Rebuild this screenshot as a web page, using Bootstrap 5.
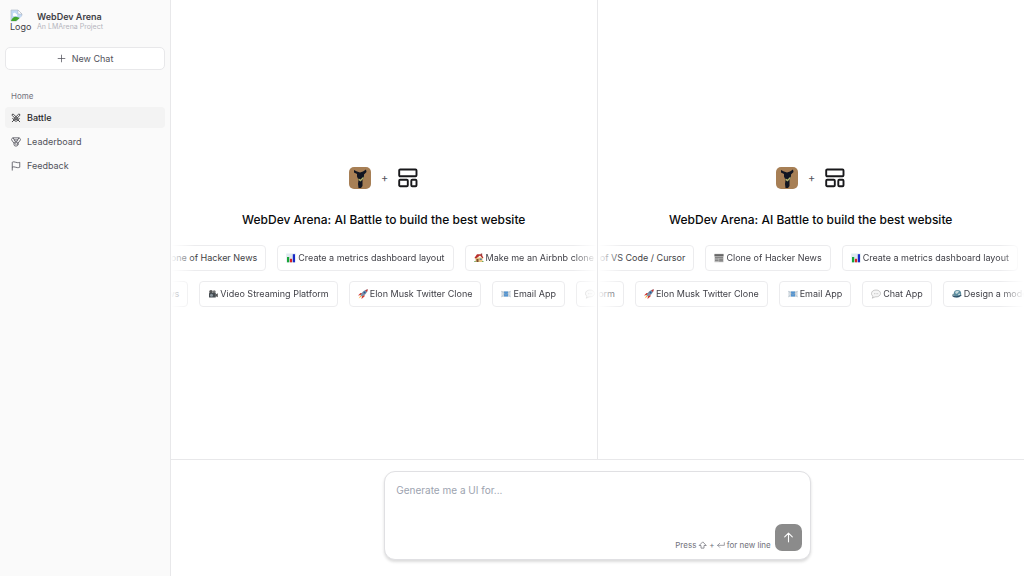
<!DOCTYPE html>
<html lang="en">
<head>
<meta charset="utf-8">
<meta name="viewport" content="width=device-width, initial-scale=1">
<title>WebDev Arena</title>
<link href="https://cdn.jsdelivr.net/npm/bootstrap@5.3.0/dist/css/bootstrap.min.css" rel="stylesheet">
<style>
  body { font-family: Inter, "Liberation Sans", sans-serif; font-size: 9px; line-height: 16px; color: #3f3f46; background: #fff; }
  svg { display: block; flex: none; }
  .line-icon { fill: none; stroke: currentColor; stroke-width: 2; stroke-linecap: round; stroke-linejoin: round; }

  .sidebar { width: 171px; background: #fafafa; border-right: 1px solid #e8e8ea; padding: 9px 5px; }
  .brand { gap: 5px; padding-left: 5px; height: 24px; }
  .brand-logo { width: 22px; height: 24px; overflow: hidden; font-size: 9px; line-height: 10px; color: #3f3f46; }
  .brand-name { font-weight: 600; line-height: 12px; color: #3f3f46; }
  .brand-sub { font-size: 7px; line-height: 8px; color: #b4b4bc; }
  .new-chat { height: 23px; margin-top: 14px; gap: 6px; padding: 0; font-size: 9px; color: #52525b; background: #fff; border: 1px solid #e8e8ea; border-radius: 5px; }
  .section-label { margin-top: 18px; padding-left: 6px; font-size: 8px; color: #71717a; }
  .side-links { margin-top: 3px; gap: 3px; }
  .side-links .nav-link { height: 21px; padding: 0 6px; gap: 6px; font-size: 9px; color: #52525b; border-radius: 4px; }
  .side-links .nav-link.active { background: #f3f3f3; color: #27272a; font-weight: 500; }

  .pane:first-child { border-right: 1px solid #e8e8ea; }
  .pane-inner { padding-top: 15px; }
  .pane-marks { gap: 10px; color: #18181b; }
  .plus-sign { font-size: 11px; color: #52525b; }
  .pane-title { margin: 22px 0 16px; font-size: 12px; line-height: 18px; font-weight: 500; color: #09090b; }
  .ticker { overflow: hidden; -webkit-mask-image: linear-gradient(90deg, transparent, #000 24px, #000 calc(100% - 24px), transparent); mask-image: linear-gradient(90deg, transparent, #000 24px, #000 calc(100% - 24px), transparent); }
  .ticker + .ticker { margin-top: 10px; }
  .ticker-track { gap: 11px; width: max-content; margin-left: calc(-1px * var(--scrolled)); }
  .chip { height: 26px; padding: 0 8px; gap: 2px; font-size: 9px; color: #3f3f46; background: #fff; border: 1px solid #ececee; border-radius: 4px; white-space: nowrap; }

  .composer-bar { border-top: 1px solid #e8e8ea; padding: 11px 0 16px; }
  .composer { height: 89px; border: 1px solid #e0e0e3; border-radius: 11px; background: #fff; box-shadow: 0 2px 3px rgba(0,0,0,.14); padding: 9px 8px 8px 11px; }
  .composer textarea { resize: none; outline: 0; font-size: 10px; line-height: 18px; color: #18181b; }
  .composer textarea::placeholder { color: #9ca3af; opacity: 1; }
  .hint { font-size: 8px; line-height: 12px; color: #71717a; gap: 2px; }
  .send { width: 27px; height: 27px; padding: 0; background: #8b8b8b; color: #fff; border: 0; border-radius: 7px; }
</style>
</head>
<body>
<svg width="0" height="0" class="position-absolute" aria-hidden="true">
  <symbol id="i-bot" viewBox="0 0 22 22">
    <rect width="22" height="22" rx="5" fill="#a77f55"/>
    <path d="M5 3 8 4.500 11 5.500 14 4.500 17 2.500 17.500 5 15 7.500 15 10 13.500 13 13.500 19 12 21 9.500 21 9 17 9.500 13 8 9.500 8 7 5 5.500Z" fill="#111521"/>
    <path d="m9.500 11.500 2 1 3-3v2l-3 3-2-1.500Z" fill="#b3b66e"/>
  </symbol>
  <symbol id="i-grid" viewBox="0 0 20 20">
    <g fill="none" stroke="currentColor" stroke-width="1.900"><rect x="1.200" y="1.500" width="17.300" height="6.800" rx="1"/><rect x="1.200" y="11.800" width="8.600" height="6.400" rx="1"/><rect x="13.300" y="11.800" width="5.200" height="6.400" rx="1"/></g>
  </symbol>
  <symbol id="e-news" viewBox="0 0 10 10">
    <rect x=".5" y=".8" width="9" height="8.400" fill="#bbb"/><path d="M.5 1.200h9v2h-9z" fill="#666"/><path d="M1 4.500h8M1 6h3.500M1 7.500h3.500" stroke="#777" stroke-width=".8"/><path d="M5.200 5.500h3.800v3H5.200z" fill="#888"/>
  </symbol>
  <symbol id="e-chart" viewBox="0 0 10 10">
    <rect x=".3" y=".5" width="9.400" height="9" fill="#dfe9ef"/><path d="M1 4h2.200v5.300H1z" fill="#16a637"/><path d="M3.900 5.800h2.200v3.500H3.900z" fill="#d92525"/><path d="M6.800 1.200H9v8.100H6.800z" fill="#1828c8"/>
  </symbol>
  <symbol id="e-house" viewBox="0 0 10 10">
    <path d="M1.500 4.500h7V9h-7z" fill="#e8c57f"/><path d="M.4 5 3 1.200h4.500L9.500 5l-1 .3L6 2.500 2 5.500Z" fill="#b82f2c"/><path d="M6.800.5h1.400v2H6.800z" fill="#944"/><path d="M2.500 6h2v3h-2z" fill="#7b4c33"/><path d="M5.700 5.500h2V7h-2z" fill="#5780a3"/><path d="M0 9q1-2.200 2 0M7.800 9q1-2.200 2 0" fill="#559b47"/>
  </symbol>
  <symbol id="e-camera" viewBox="0 0 10 10">
    <circle cx="3" cy="2.800" r="1.800" fill="#555"/><circle cx="6.200" cy="2.800" r="1.500" fill="#777"/><rect x="1" y="3.800" width="6.800" height="4.800" rx=".7" fill="#454b50"/><path d="m7.500 5.500 2.300-1.200v4L7.500 7z" fill="#555"/><circle cx="3.500" cy="6.200" r="1.500" fill="#8a969e"/>
  </symbol>
  <symbol id="e-rocket" viewBox="0 0 10 10">
    <path d="M3 6 0 6.500 2.500 4h2zM4 7 3.500 10 6.500 7.500V5.500z" fill="#d5362f"/><path d="M2.500 6.300Q4.500 1.200 9.800.3 9 5.500 3.800 7.500Z" fill="#7d91a8"/><path d="M7.300 1.200 9.800.3 9 2.900Z" fill="#cf322e"/><circle cx="6.500" cy="3.600" r="1" fill="#225a9a"/><path d="m2.500 6.500 1 1-2.800 2Z" fill="#ffae32"/>
  </symbol>
  <symbol id="e-mail" viewBox="0 0 10 10">
    <rect x=".3" y="2" width="9.400" height="6" fill="#d7dee4"/><rect x="3" y="2.500" width="4" height="5" fill="#5495d2"/><path d="M.3 2.200 5 5.600 9.700 2.200M.3 8 3.500 5M9.700 8 6.500 5" fill="none" stroke="#9baebd" stroke-width=".5"/>
  </symbol>
  <symbol id="e-chat" viewBox="0 0 10 10">
    <path d="M5 1C2.200 1 .5 2.500.5 4.500S1.600 7 2.100 7.300L1.200 9.200 4 7.900C7.500 8.100 9.500 6.500 9.500 4.500S7.800 1 5 1Z" fill="#f5f5f5" stroke="#aaa" stroke-width=".6"/><path d="M3 4.700h.5M4.800 4.700h.5M6.600 4.700h.5" stroke="#777" stroke-width=".7"/>
  </symbol>
  <symbol id="e-globe" viewBox="0 0 10 10">
    <circle cx="5.500" cy="4.800" r="3.700" fill="#5d8ea0"/><path d="M3 3q2-2 4-1L6 4 4 5ZM6 5l2-.5.5 1.500L7 7.500Z" fill="#c6dadd"/><path d="M.5 6.500Q4 9.500 9.300 6" fill="none" stroke="#2b4d66" stroke-width="1.200"/><circle cx="1.400" cy="5.800" r="1" fill="#78949d"/>
  </symbol>
  <symbol id="e-laptop" viewBox="0 0 10 10"><path d="M1.500 1.500h7v5h-7z" fill="#4a89b5"/><path d="M.3 7h9.400v1.500H.3z" fill="#888"/></symbol>
</svg>

<div class="d-flex min-vh-100">
  <aside class="sidebar flex-shrink-0">
    <div class="brand d-flex align-items-center">
      <div class="brand-logo">
        <svg width="14" height="13" viewBox="0 0 14 13" aria-hidden="true"><path d="M1 1h7l4 4v7H1z" fill="#c2d9f5" stroke="#b6bdc8" stroke-width=".7"/><path d="M8 1v4h4Z" fill="#fff" stroke="#a6adb8" stroke-width=".5"/><path d="M3 5.500a1.500 1.500 0 0 1 3-.5 1.200 1.200 0 0 1 1 2H3Z" fill="#fff"/><path d="M1 12q2-5 6-4l3 1-4 3Z" fill="#43a52d"/><path d="m6 13 7-7v7Z" fill="#fafafa"/></svg>
        Logo
      </div>
      <div>
        <div class="brand-name">WebDev Arena</div>
        <div class="brand-sub">An LMArena Project</div>
      </div>
    </div>
    <button type="button" class="new-chat btn w-100 d-flex align-items-center justify-content-center">
      <svg class="line-icon" width="9" height="9" viewBox="0 0 24 24" aria-hidden="true"><path d="M3 12h18M12 3v18"/></svg>New Chat
    </button>
    <div class="section-label">Home</div>
    <nav class="side-links nav flex-column">
      <a class="nav-link active d-flex align-items-center" href="#battle"><svg class="line-icon" width="10" height="10" viewBox="0 0 24 24" aria-hidden="true"><path d="M14.500 17.500 3 6V3h3l11.500 11.500M13 20l7-7M16 16l5 5M9.500 17.500 21 6V3h-3L6.500 14.500M4 13l7 7M8 16l-5 5"/></svg>Battle</a>
      <a class="nav-link d-flex align-items-center" href="#leaderboard"><svg class="line-icon" width="10" height="10" viewBox="0 0 24 24" aria-hidden="true"><path d="M7.200 15 1.500 7.100a2 2 0 0 1 .1-2.200L3.400 2.800A2 2 0 0 1 5 2h14a2 2 0 0 1 1.600.8l1.800 2.100a2 2 0 0 1 .1 2.200L16.800 15M11 12 5.100 2.200M13 12l5.900-9.800M8 7h8M12 18v-2h-.5"/><circle cx="12" cy="17" r="5"/></svg>Leaderboard</a>
      <a class="nav-link d-flex align-items-center" href="#feedback"><svg class="line-icon" width="10" height="10" viewBox="0 0 24 24" aria-hidden="true"><path d="M3 22V3s1-1 4-1 5 2 9 2 5-1 5-1v12s-1 1-5 1-6-2-9-2-4 1-4 1"/></svg>Feedback</a>
    </nav>
  </aside>

  <main class="d-flex flex-column flex-grow-1 overflow-hidden">
    <div class="row g-0 flex-grow-1">
      <section class="pane col-6 d-flex flex-column justify-content-center">
        <div class="pane-inner">
          <div class="pane-marks d-flex align-items-center justify-content-center"><svg width="22" height="22"><use href="#i-bot"/></svg><span class="plus-sign">+</span><svg width="20" height="20"><use href="#i-grid"/></svg></div>
          <h2 class="pane-title text-center">WebDev Arena: AI Battle to build the best website</h2>
          <div class="ticker"><div class="ticker-track d-flex" style="--scrolled:30">
            <button type="button" class="chip btn d-flex align-items-center"><svg width="10" height="10"><use href="#e-news"/></svg>Clone of Hacker News</button>
            <button type="button" class="chip btn d-flex align-items-center"><svg width="10" height="10"><use href="#e-chart"/></svg>Create a metrics dashboard layout</button>
            <button type="button" class="chip btn d-flex align-items-center"><svg width="10" height="10"><use href="#e-house"/></svg>Make me an Airbnb clone</button>
          </div></div>
          <div class="ticker"><div class="ticker-track d-flex" style="--scrolled:108">
            <button type="button" class="chip btn d-flex align-items-center"><svg width="10" height="10"><use href="#e-news"/></svg>Clone of Hacker News</button>
            <button type="button" class="chip btn d-flex align-items-center"><svg width="10" height="10"><use href="#e-camera"/></svg>Video Streaming Platform</button>
            <button type="button" class="chip btn d-flex align-items-center"><svg width="10" height="10"><use href="#e-rocket"/></svg>Elon Musk Twitter Clone</button>
            <button type="button" class="chip btn d-flex align-items-center"><svg width="10" height="10"><use href="#e-mail"/></svg>Email App</button>
            <button type="button" class="chip btn d-flex align-items-center"><svg width="10" height="10"><use href="#e-chat"/></svg>Chat App</button>
          </div></div>
        </div>
      </section>
      <section class="pane col-6 d-flex flex-column justify-content-center">
        <div class="pane-inner">
          <div class="pane-marks d-flex align-items-center justify-content-center"><svg width="22" height="22"><use href="#i-bot"/></svg><span class="plus-sign">+</span><svg width="20" height="20"><use href="#i-grid"/></svg></div>
          <h2 class="pane-title text-center">WebDev Arena: AI Battle to build the best website</h2>
          <div class="ticker"><div class="ticker-track d-flex" style="--scrolled:46">
            <button type="button" class="chip btn d-flex align-items-center"><svg width="10" height="10"><use href="#e-laptop"/></svg>Clone of VS Code / Cursor</button>
            <button type="button" class="chip btn d-flex align-items-center"><svg width="10" height="10"><use href="#e-news"/></svg>Clone of Hacker News</button>
            <button type="button" class="chip btn d-flex align-items-center"><svg width="10" height="10"><use href="#e-chart"/></svg>Create a metrics dashboard layout</button>
          </div></div>
          <div class="ticker"><div class="ticker-track d-flex" style="--scrolled:112">
            <button type="button" class="chip btn d-flex align-items-center"><svg width="10" height="10"><use href="#e-camera"/></svg>Video Streaming Platform</button>
            <button type="button" class="chip btn d-flex align-items-center"><svg width="10" height="10"><use href="#e-rocket"/></svg>Elon Musk Twitter Clone</button>
            <button type="button" class="chip btn d-flex align-items-center"><svg width="10" height="10"><use href="#e-mail"/></svg>Email App</button>
            <button type="button" class="chip btn d-flex align-items-center"><svg width="10" height="10"><use href="#e-chat"/></svg>Chat App</button>
            <button type="button" class="chip btn d-flex align-items-center"><svg width="10" height="10"><use href="#e-globe"/></svg>Design a modern</button>
          </div></div>
        </div>
      </section>
    </div>
    <div class="composer-bar">
      <form class="composer w-50 mx-auto d-flex flex-column">
        <textarea class="w-100 flex-grow-1 border-0 p-0 bg-transparent" aria-label="Prompt" placeholder="Generate me a UI for..."></textarea>
        <div class="d-flex justify-content-end align-items-end gap-1">
          <div class="hint d-flex align-items-center">Press <svg class="line-icon" width="9" height="9" viewBox="0 0 24 24" aria-label="Shift"><path d="M12 3 3 12h5v7h8v-7h5Z"/></svg> + <svg class="line-icon" width="8" height="8" viewBox="0 0 24 24" aria-label="Enter"><path d="M22 5v8H2M8 7l-6 6 6 6"/></svg> for new line</div>
          <button type="button" class="send btn d-flex align-items-center justify-content-center" aria-label="Send"><svg class="line-icon" width="13" height="13" viewBox="0 0 24 24"><path d="M12 20V4M5 11l7-7 7 7"/></svg></button>
        </div>
      </form>
    </div>
  </main>
</div>
<script src="https://cdn.jsdelivr.net/npm/bootstrap@5.3.0/dist/js/bootstrap.bundle.min.js"></script>
</body>
</html>
